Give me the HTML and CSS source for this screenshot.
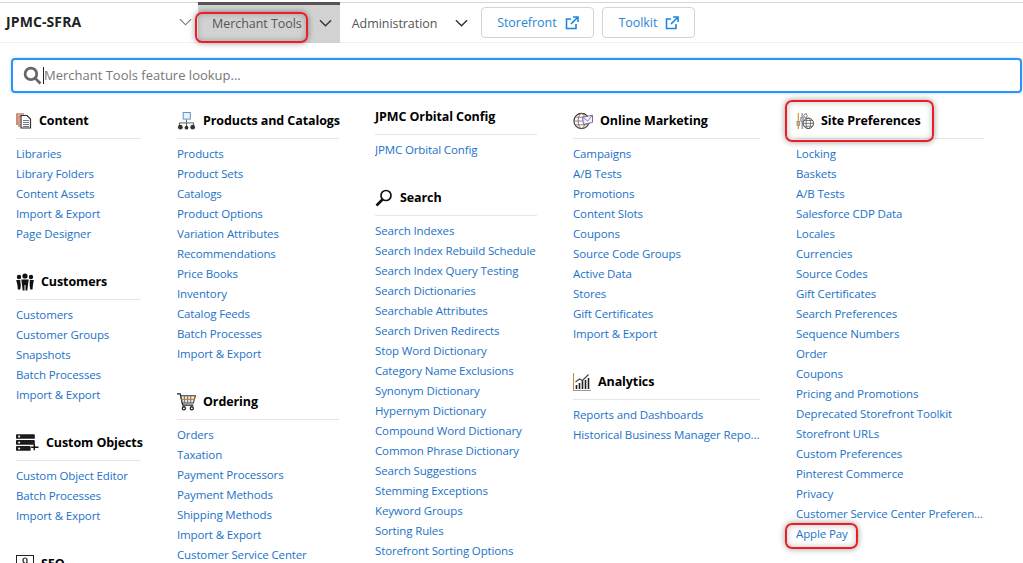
FILE: index.html
```html
<!DOCTYPE html>
<html lang="en">
<head>
  <meta charset="UTF-8" />
  <title>Merchant Tools</title>
  <link rel="stylesheet" href="styles.css">
</head>
<body>
  <!-- Top bar -->
  <header class="topbar">
    <div class="site-select">
      <span>JPMC-SFRA</span>
      <svg class="chevron light" viewBox="0 0 14 8"><path d="M1 1l6 6 6-6"/></svg>
    </div>
    <div class="tab active">
      <span>Merchant Tools</span>
      <svg class="chevron" viewBox="0 0 14 8"><path d="M1 1l6 6 6-6"/></svg>
    </div>
    <div class="tab">
      <span>Administration</span>
      <svg class="chevron" viewBox="0 0 14 8"><path d="M1 1l6 6 6-6"/></svg>
    </div>
    <a class="ext-btn storefront">Storefront
      <svg viewBox="0 0 14 14"><path d="M6 3H1.500v9.500H11V8M6 8l6.500-6.500M8 1h5v5"/></svg>
    </a>
    <a class="ext-btn toolkit">Toolkit
      <svg viewBox="0 0 14 14"><path d="M6 3H1.500v9.500H11V8M6 8l6.500-6.500M8 1h5v5"/></svg>
    </a>
  </header>

  <!-- Feature lookup -->
  <div class="lookup">
    <svg viewBox="0 0 18 18"><circle cx="7.500" cy="7.500" r="5.500"/><path d="M11.500 11.500l5 5"/></svg>
    <span class="caret"></span>
    <span class="placeholder">Merchant Tools feature lookup...</span>
  </div>

  <main class="menu">
    <div class="col col-1">
      <section>
        <h2>
          <svg class="icon" viewBox="0 0 16 16"><path d="M1 12V1h7" fill="none" stroke="#a8442a" stroke-width="1.200"/><path d="M3 14V3h7" fill="none" stroke="#c2572f" stroke-width="1.200"/><path d="M5 2.500h6l3.500 3.500v9H5z" fill="#fff" stroke="#333" stroke-width="1.200"/><path d="M7 7.500h6M7 9.500h6M7 11.500h6M7 13.500h6" stroke="#777"/></svg>
          Content
        </h2>
        <a>Libraries</a>
        <a>Library Folders</a>
        <a>Content Assets</a>
        <a>Import &amp; Export</a>
        <a>Page Designer</a>
      </section>
      <section>
        <h2>
          <svg class="icon i-18" viewBox="0 0 18 18"><g fill="#111"><circle cx="9" cy="3" r="2.600"/><circle cx="3" cy="4" r="2.200"/><circle cx="15" cy="4" r="2.200"/><path d="M5.300 6.500h7.400l-.8 6-.6 5H9.500V12h-1v5.500H6.700l-.6-5zM.2 7h4l.6 5.500-.5 4H1.800l-.3-4zM13.800 7h4l-.9 5.500-.4 4h-2.300l-.5-4z"/></g></svg>
          Customers
        </h2>
        <a>Customers</a>
        <a>Customer Groups</a>
        <a>Snapshots</a>
        <a>Batch Processes</a>
        <a>Import &amp; Export</a>
      </section>
      <section>
        <h2>
          <svg class="icon i-22" viewBox="0 0 22 16"><g fill="#1c1c1c"><rect x="0" y="0" width="18" height="4.500" rx=".8"/><rect x="0" y="5.700" width="18" height="4.500" rx=".8"/><rect x="0" y="11.400" width="14" height="4.500" rx=".8"/></g><g fill="#fff"><circle cx="3" cy="2.200" r="1"/><circle cx="3" cy="8" r="1"/><circle cx="3" cy="13.700" r="1"/></g><path d="M17.500 9.500v6M14.500 12.500h7" stroke="#111" stroke-width="1.400"/></svg>
          Custom Objects
        </h2>
        <a>Custom Object Editor</a>
        <a>Batch Processes</a>
        <a>Import &amp; Export</a>
      </section>
      <section>
        <h2>
          <svg class="icon i-18" viewBox="0 0 18 18"><rect x=".5" y=".5" width="17" height="17" fill="#fff" stroke="#222"/><path d="M5 15c5-3 6-8 6-10a2 2 0 0 0-4 0c0 3 3 5 5 3" fill="none" stroke="#222" stroke-width="1.200"/></svg>
          SEO
        </h2>
      </section>
    </div>

    <div class="col col-2">
      <section>
        <h2>
          <svg class="icon i-19" viewBox="0 0 19 19"><rect x="6" y=".5" width="7.500" height="7" fill="#eaf2fb" stroke="#5b8fc4"/><path d="M9.500 8v3M2 15v-3.500h15V15M9.500 11.500V15" fill="none" stroke="#555"/><circle cx="3" cy="16" r="2.500" fill="#333"/><circle cx="9.500" cy="16.500" r="2" fill="#333"/><circle cx="16" cy="16" r="2.500" fill="#333"/></svg>
          Products and Catalogs
        </h2>
        <a>Products</a>
        <a>Product Sets</a>
        <a>Catalogs</a>
        <a>Product Options</a>
        <a>Variation Attributes</a>
        <a>Recommendations</a>
        <a>Price Books</a>
        <a>Inventory</a>
        <a>Catalog Feeds</a>
        <a>Batch Processes</a>
        <a>Import &amp; Export</a>
      </section>
      <section>
        <h2>
          <svg class="icon i-19" viewBox="0 0 18 17"><path d="M0 .8h3l2.500 10.700h10" fill="none" stroke="#222" stroke-width="1.200"/><path d="M3.500 2.500h14l-2 7H5z" fill="#fbe7c8" stroke="#333"/><path d="M7 2.500v7M10 2.500v7M13 2.500v7" stroke="#4a78b0"/><path d="M4 6h13" stroke="#c77a2a"/><circle cx="6.500" cy="14.500" r="1.500" fill="#fff" stroke="#222" stroke-width="1.200"/><circle cx="14" cy="14.500" r="1.500" fill="#fff" stroke="#222" stroke-width="1.200"/></svg>
          Ordering
        </h2>
        <a>Orders</a>
        <a>Taxation</a>
        <a>Payment Processors</a>
        <a>Payment Methods</a>
        <a>Shipping Methods</a>
        <a>Import &amp; Export</a>
        <a>Customer Service Center</a>
      </section>
    </div>

    <div class="col col-3">
      <section>
        <h2 class="plain">JPMC Orbital Config</h2>
        <a>JPMC Orbital Config</a>
      </section>
      <section>
        <h2>
          <svg class="icon i-18" viewBox="0 0 18 18"><circle cx="11" cy="6.500" r="5" fill="#fff" stroke="#111" stroke-width="1.700"/><path d="M7.500 10.500l-6 6" stroke="#111" stroke-width="2.600"/></svg>
          Search
        </h2>
        <a>Search Indexes</a>
        <a>Search Index Rebuild Schedule</a>
        <a>Search Index Query Testing</a>
        <a>Search Dictionaries</a>
        <a>Searchable Attributes</a>
        <a>Search Driven Redirects</a>
        <a>Stop Word Dictionary</a>
        <a>Category Name Exclusions</a>
        <a>Synonym Dictionary</a>
        <a>Hypernym Dictionary</a>
        <a>Compound Word Dictionary</a>
        <a>Common Phrase Dictionary</a>
        <a>Search Suggestions</a>
        <a>Stemming Exceptions</a>
        <a>Keyword Groups</a>
        <a>Sorting Rules</a>
        <a>Storefront Sorting Options</a>
      </section>
    </div>

    <div class="col col-4">
      <section>
        <h2>
          <svg class="icon i-21" viewBox="0 0 21 18"><circle cx="9" cy="9" r="8" fill="#fff" stroke="#333" stroke-width="1.200"/><ellipse cx="9" cy="9" rx="3.500" ry="8" fill="none" stroke="#b5662a"/><path d="M1 9h16M2 5h14M2 13h14" stroke="#4a6f9c" stroke-width=".8"/><path d="M10 5l10.500-2v7.500L11 12.500z" fill="#f3f3f8" stroke="#75609a"/><path d="M10 5l5.500 4 5-6" fill="none" stroke="#75609a" stroke-width=".8"/></svg>
          Online Marketing
        </h2>
        <a>Campaigns</a>
        <a>A/B Tests</a>
        <a>Promotions</a>
        <a>Content Slots</a>
        <a>Coupons</a>
        <a>Source Code Groups</a>
        <a>Active Data</a>
        <a>Stores</a>
        <a>Gift Certificates</a>
        <a>Import &amp; Export</a>
      </section>
      <section>
        <h2>
          <svg class="icon i-18" viewBox="0 0 18 18"><path d="M.5 0v18" stroke="#c58a3a"/><path d="M1 17.500h17" stroke="#999"/><path d="M3.500 16v-4M6.500 16v-6M9.500 16V8M12.500 16V7M15.500 16V5" stroke="#222" stroke-width="1.600"/><path d="M2.500 9l4-3 3 1.500L15.500 1.500" fill="none" stroke="#444" stroke-width="1.200"/></svg>
          Analytics
        </h2>
        <a>Reports and Dashboards</a>
        <a>Historical Business Manager Reports</a>
      </section>
    </div>

    <div class="col col-5">
      <section>
        <h2>
          <svg class="icon i-18" viewBox="0 0 18 19"><path d="M2 1v17" stroke="#d09a50" stroke-width="1.400"/><path d="M6 1v17" stroke="#8a97a8" stroke-width="1.400"/><path d="M10 1v9" stroke="#8a97a8" stroke-width="1.400"/><rect x=".5" y="10" width="3" height="4" fill="#e0b060" stroke="#777" stroke-width=".6"/><rect x="4.500" y="6" width="3" height="4" fill="#bbb" stroke="#777" stroke-width=".6"/><circle cx="9.500" cy="4" r="1.800" fill="#fff" stroke="#777"/><circle cx="12.500" cy="12" r="5.500" fill="#fff" stroke="#444"/><ellipse cx="12.500" cy="12" rx="2.300" ry="5.500" fill="none" stroke="#555" stroke-width=".8"/><path d="M7 12h11M8 9h9M8 15h9" stroke="#555" stroke-width=".8"/></svg>
          Site Preferences
        </h2>
        <a>Locking</a>
        <a>Baskets</a>
        <a>A/B Tests</a>
        <a>Salesforce CDP Data</a>
        <a>Locales</a>
        <a>Currencies</a>
        <a>Source Codes</a>
        <a>Gift Certificates</a>
        <a>Search Preferences</a>
        <a>Sequence Numbers</a>
        <a>Order</a>
        <a>Coupons</a>
        <a>Pricing and Promotions</a>
        <a>Deprecated Storefront Toolkit</a>
        <a>Storefront URLs</a>
        <a>Custom Preferences</a>
        <a>Pinterest Commerce</a>
        <a>Privacy</a>
        <a>Customer Service Center Preferences</a>
        <a>Apple Pay</a>
      </section>
    </div>
  </main>

  <!-- Red annotation boxes -->
  <div class="callout callout-tab"></div>
  <div class="callout callout-prefs"></div>
  <div class="callout callout-apple"></div>
</body>
</html>
```

FILE: styles.css
```css
:root {
  --link: #1b72c8;
  --rule: #e6e6e6;
  --blue: #2a94f4;
}

html, body {
  height: 563px;
  overflow: hidden;
}

body {
  margin: 0;
  position: relative;
  background: #fff;
  color: #111;
  font-family: "Open Sans", "Noto Sans", sans-serif;
  font-size: 11.5px;
  letter-spacing: -0.13px;
}

/* Top bar */
.topbar {
  display: flex;
  align-items: stretch;
  height: 39px;
  margin-top: 2px;
  border-top: 1px solid #d6d6d6;
  border-bottom: 1px solid #efefef;
  font-size: 12.5px;
  letter-spacing: -0.05px;
  color: #555;
}

.site-select {
  display: flex;
  align-items: center;
  justify-content: space-between;
  width: 198px;
  padding: 0 6px 2px;
  box-sizing: border-box;
  font-weight: 700;
  font-size: 14px;
  letter-spacing: 0.1px;
  color: #222;
}

.chevron {
  width: 13px;
  height: 8px;
  fill: none;
  stroke: #333;
  stroke-width: 1.500;
}

.chevron.light {
  stroke: #777;
  stroke-width: 1.200;
}

.tab {
  display: flex;
  align-items: center;
  padding: 0 13px 2px 12px;
  gap: 18px;
  margin-bottom: -1px;
  border-top: 3px solid transparent;
  margin-top: -1px;
}

.tab.active {
  background: #d2d2d2;
  border-top-color: #555;
  padding-left: 14px;
  padding-right: 8px;
  gap: 17px;
}

.ext-btn {
  display: flex;
  align-items: center;
  justify-content: center;
  gap: 8px;
  height: 31px;
  margin-top: 4px;
  border: 1px solid #d4d4d4;
  border-radius: 4px;
  color: #2c86d8;
  box-sizing: border-box;
}

.ext-btn svg {
  width: 14px;
  height: 14px;
  fill: none;
  stroke: #1b87e0;
  stroke-width: 1.600;
}

.storefront {
  width: 113px;
}

.toolkit {
  width: 93px;
  margin-left: 8px;
}

/* Feature lookup */
.lookup {
  display: flex;
  align-items: center;
  height: 35px;
  box-sizing: border-box;
  margin: 15px 1px 0 11px;
  padding: 0 0 1px 10px;
  border: 2px solid var(--blue);
  border-radius: 4px;
  box-shadow: 0 0 3px rgba(42, 148, 244, 0.4);
  font-size: 13px;
  letter-spacing: 0;
  color: #777;
}

.lookup svg {
  width: 19px;
  height: 19px;
  fill: none;
  stroke: #666;
  stroke-width: 2.600;
}

.caret {
  width: 1px;
  height: 17px;
  margin-left: 1px;
  background: #222;
}

/* Menu columns */
.menu {
  display: flex;
  gap: 36px;
  padding: 16px 0 0 16px;
}

.col-1 { width: 125px; }
.col-2 { width: 162px; }
.col-3 { width: 162px; }
.col-4 { width: 187px; }
.col-5 { width: 188px; }

section {
  margin-bottom: 26px;
}

h2 {
  display: flex;
  align-items: center;
  gap: 7px;
  height: 30px;
  box-sizing: border-box;
  margin: 0 0 5px;
  padding-bottom: 6px;
  border-bottom: 1px solid var(--rule);
  font-size: 12.5px;
  font-weight: 700;
  letter-spacing: -0.1px;
  color: #000;
  white-space: nowrap;
}

h2.plain {
  height: 26px;
  padding-bottom: 10px;
}

.icon {
  width: 16px;
  height: 16px;
  flex: none;
}

.icon.i-18 {
  width: 18px;
  height: 18px;
}

.icon.i-19 {
  width: 19px;
  height: 18px;
}

.icon.i-21 {
  width: 20px;
  height: 18px;
}

.icon.i-22 {
  width: 23px;
  height: 17px;
}

section a {
  display: block;
  height: 20px;
  line-height: 20px;
  color: var(--link);
  white-space: nowrap;
  overflow: hidden;
  text-overflow: ellipsis;
}

/* Red annotation boxes */
.callout {
  position: absolute;
  box-sizing: border-box;
  border: 2px solid #ee1c25;
  border-radius: 7px;
  box-shadow: 0 0 6px rgba(0, 0, 0, 0.4), inset 0 0 6px rgba(0, 0, 0, 0.25);
}

.callout-tab {
  left: 195px;
  top: 12px;
  width: 113px;
  height: 31px;
}

.callout-prefs {
  left: 785px;
  top: 100px;
  width: 149px;
  height: 42px;
}

.callout-apple {
  left: 785px;
  top: 523px;
  width: 73px;
  height: 26px;
}
```
